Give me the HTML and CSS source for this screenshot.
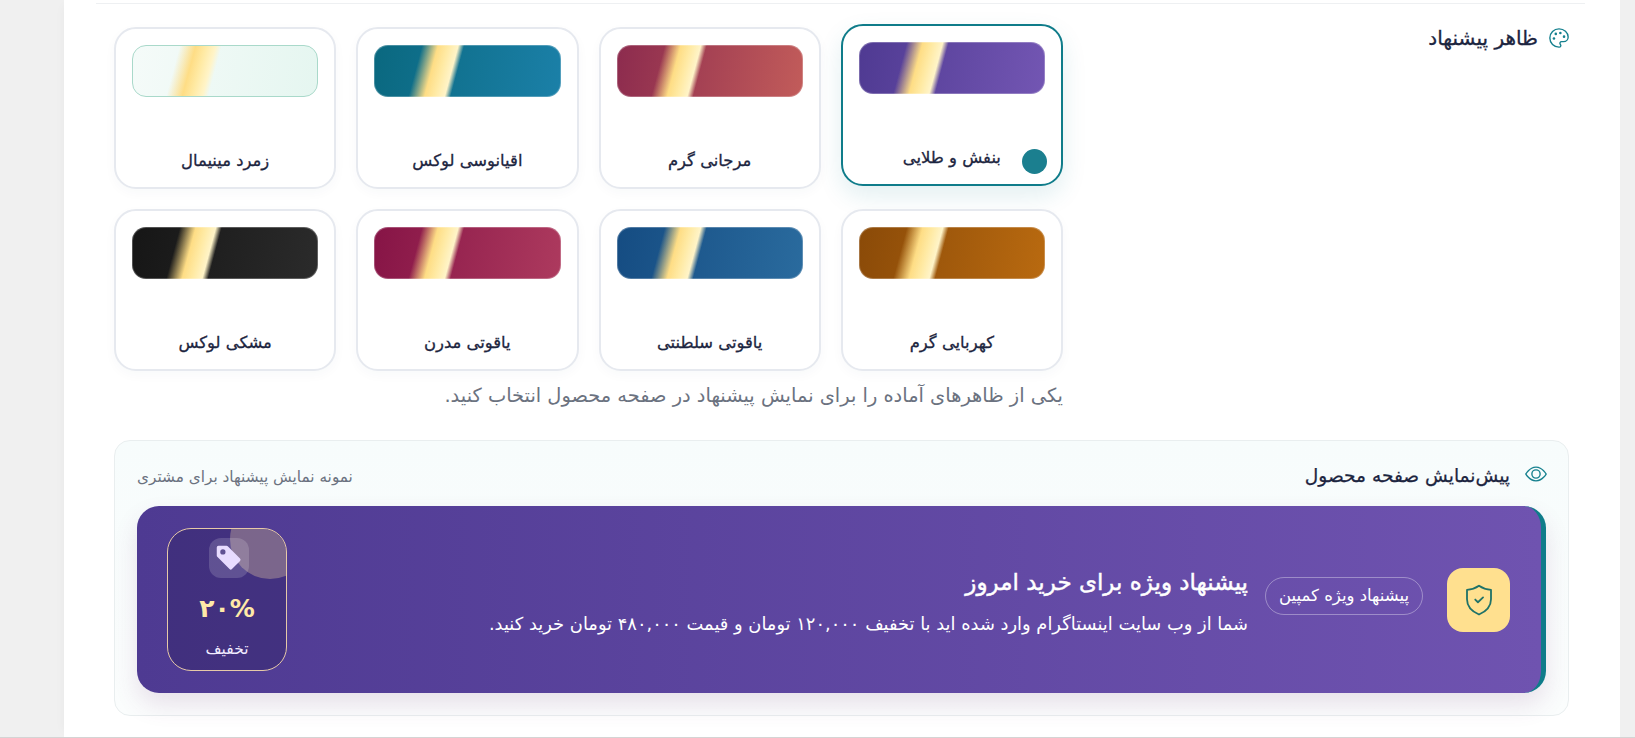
FILE: index.html
```html
<!DOCTYPE html>
<html lang="fa" dir="rtl">
<head>
<meta charset="utf-8">
<title>ظاهر پیشنهاد</title>
<link rel="stylesheet" href="styles.css">
</head>
<body>
<main class="panel">
  <hr class="rule">
  <div class="inner">
    <section class="row">
      <div class="legend">
        <svg class="ico-palette" viewBox="0 0 24 24" fill="none" stroke="currentColor" stroke-width="1.5" stroke-linecap="round" stroke-linejoin="round"><path d="M12 22a1 1 0 0 1 0-20 10 9 0 0 1 10 9 5 5 0 0 1-5 5h-2.25a1.75 1.75 0 0 0-1.4 2.8l.3.4a1.75 1.75 0 0 1-1.4 2.8z"/><circle cx="13.5" cy="6.5" r="1.4" fill="currentColor" stroke="none"/><circle cx="17.5" cy="10.5" r="1.4" fill="currentColor" stroke="none"/><circle cx="6.5" cy="12.5" r="1.4" fill="currentColor" stroke="none"/><circle cx="8.5" cy="7.5" r="1.4" fill="currentColor" stroke="none"/></svg>
        <span>ظاهر پیشنهاد</span>
      </div>
      <div class="options">
        <div class="grid">
          <div class="card selected"><div class="swatch violet"></div><div class="name">بنفش و طلایی</div><span class="dot"></span></div>
          <div class="card"><div class="swatch coral"></div><div class="name">مرجانی گرم</div></div>
          <div class="card"><div class="swatch ocean"></div><div class="name">اقیانوسی لوکس</div></div>
          <div class="card"><div class="swatch emerald"></div><div class="name">زمرد مینیمال</div></div>
          <div class="card"><div class="swatch amber"></div><div class="name">کهربایی گرم</div></div>
          <div class="card"><div class="swatch sapphire"></div><div class="name">یاقوتی سلطنتی</div></div>
          <div class="card"><div class="swatch ruby"></div><div class="name">یاقوتی مدرن</div></div>
          <div class="card"><div class="swatch black"></div><div class="name">مشکی لوکس</div></div>
        </div>
        <p class="help">یکی از ظاهرهای آماده را برای نمایش پیشنهاد در صفحه محصول انتخاب کنید.</p>
      </div>
    </section>

    <section class="preview">
      <div class="preview-head">
        <div class="preview-title">
          <svg class="ico-eye" viewBox="0 0 16 16" fill="currentColor"><path d="M16 8s-3-5.500-8-5.500S0 8 0 8s3 5.500 8 5.500S16 8 16 8zM1.173 8a13.133 13.133 0 0 1 1.660-2.043C4.120 4.668 5.880 3.500 8 3.500c2.120 0 3.879 1.168 5.168 2.457A13.133 13.133 0 0 1 14.828 8c-.058.087-.122.183-.195.288-.335.480-.830 1.120-1.465 1.755C11.879 11.332 10.119 12.500 8 12.500c-2.120 0-3.879-1.168-5.168-2.457A13.134 13.134 0 0 1 1.172 8z"/><path d="M8 5.500a2.500 2.500 0 1 0 0 5 2.500 2.500 0 0 0 0-5zM4.500 8a3.500 3.500 0 1 1 7 0 3.500 3.500 0 0 1-7 0z"/></svg>
          <span>پیش‌نمایش صفحه محصول</span>
        </div>
        <span class="preview-note">نمونه نمایش پیشنهاد برای مشتری</span>
      </div>
      <div class="banner">
        <div class="shield-box">
          <svg class="ico-shield" viewBox="0 0 24 24" fill="none" stroke="currentColor" stroke-width="1.2" stroke-linecap="round" stroke-linejoin="round"><path d="M12 2.500c2.500 1.700 5 2.500 8 2.800v6.200c0 4.500-3 8-8 10.200-5-2.200-8-5.700-8-10.200V5.300c3-.3 5.500-1.100 8-2.800z"/><path d="M9.500 11.700l1.800 1.800 3.400-3.200"/></svg>
        </div>
        <span class="pill">پیشنهاد ویژه کمپین</span>
        <div class="copy">
          <h2 class="title">پیشنهاد ویژه برای خرید امروز</h2>
          <p class="desc">شما از وب سایت اینستاگرام وارد شده اید با تخفیف ۱۲۰,۰۰۰ تومان و قیمت ۴۸۰,۰۰۰ تومان خرید کنید.</p>
        </div>
        <div class="discount">
          <span class="glow"></span>
          <div class="tag-box">
            <svg class="ico-tag" viewBox="0 0 16 16" fill="currentColor"><path d="M2 1a1 1 0 0 0-1 1v4.586a1 1 0 0 0 .293.707l7 7a1 1 0 0 0 1.414 0l4.586-4.586a1 1 0 0 0 0-1.414l-7-7A1 1 0 0 0 6.586 1H2zm4 3.500a1.500 1.500 0 1 1-3 0 1.500 1.500 0 0 1 3 0z"/></svg>
          </div>
          <div class="percent">۲۰%</div>
          <div class="off">تخفیف</div>
        </div>
      </div>
    </section>
  </div>
</main>
</body>
</html>
```

FILE: styles.css
```css
* { box-sizing: border-box; }
html, body { margin: 0; height: 738px; overflow: hidden; }
body {
  background: #f0f0f0;
  font-family: "DejaVu Sans", "Noto Sans", sans-serif;
  color: #1c2540;
  border-bottom: 1px solid #d4d4d4;
}
.panel {
  margin-right: 15px;
  margin-left: 64px;
  height: 737px;
  background: #fff;
  padding: 3px 35px 0 32px;
  box-shadow: -6px 0 10px -6px rgba(0,0,0,.04);
}
.rule { margin: 0; border: 0; border-top: 1px solid #eef0f2; }
.inner { padding: 23px 16px 0 18px; }
.row { display: flex; justify-content: space-between; align-items: flex-start; }
.legend { display: flex; align-items: center; gap: 10px; margin: -1px -1px 0 0; font-size: 20px; -webkit-text-stroke: .3px currentColor; }
.ico-palette { width: 22px; height: 22px; color: #15808e; }
.options { width: 949px; }
.grid { display: grid; grid-template-columns: repeat(4, 1fr); gap: 20px; }
.card {
  position: relative;
  height: 162px;
  padding: 16px;
  background: #fff;
  border: 2px solid #e6e9ef;
  border-radius: 22px;
  box-shadow: 0 4px 12px rgba(30,50,80,.03);
  text-align: center;
}
.card.selected {
  transform: translateY(-3px);
  border-color: #0f7c8a;
  box-shadow: 0 10px 24px rgba(15,124,138,.12);
}
.swatch {
  --a: #000; --b: #000;
  height: 52px;
  border-radius: 14px;
  border: 1px solid rgba(255,255,255,.25);
  background-origin: border-box;
  background-image:
    linear-gradient(105deg, transparent 24%, #fedd85 32%, #ffeaa4 37%, #fff4c8 42%, transparent 45%),
    linear-gradient(100deg, var(--a), var(--b));
}
.violet { --a: #4f3a92; --b: #7356b3; }
.coral { --a: #8c2b4e; --b: #c25c5a; }
.ocean { --a: #0a687f; --b: #1b80a8; }
.emerald { --a: #f5fbf9; --b: #e5f6f0; border-color: #a9d9ca; }
.amber { --a: #8a4a08; --b: #b96a10; }
.sapphire { --a: #154c82; --b: #2a6b9e; }
.ruby { --a: #861446; --b: #ad3a5e; }
.black { --a: #161616; --b: #2b2b2b; }
.name { margin-top: 52px; font-size: 16.4px; line-height: 24px; -webkit-text-stroke: .3px currentColor; }
.dot {
  position: absolute;
  right: 14px;
  bottom: 10px;
  width: 25px;
  height: 25px;
  border-radius: 50%;
  background: #1b7f8f;
}
.help { margin: 11px 0 0; font-size: 19.4px; line-height: 28px; color: #6b7280; }
.preview {
  margin-top: 30px;
  height: 276px;
  padding: 22px;
  border: 1px solid #e9eeef;
  border-radius: 16px;
  background: linear-gradient(180deg, #f7fcfc, #fbfdfd);
}
.preview-head { display: flex; justify-content: space-between; align-items: center; height: 24px; margin-bottom: 19px; }
.preview-title { display: flex; align-items: center; gap: 15px; font-size: 18.6px; -webkit-text-stroke: .25px currentColor; }
.ico-eye { width: 22px; height: 22px; color: #15808e; margin: -2px -1px 0 0; }
.preview-note { margin-top: 4px; font-size: 15.3px; color: #6b7280; }
.banner {
  display: flex;
  align-items: center;
  height: 187px;
  padding: 0 31px 0 30px;
  border-right: 5px solid #0f7c8a;
  border-radius: 22px;
  background: linear-gradient(90deg, #4e3a92, #6f53b0);
  box-shadow: 0 12px 24px rgba(120,60,120,.14);
  color: #fff;
}
.shield-box {
  display: flex; align-items: center; justify-content: center;
  width: 63px; height: 64px;
  border-radius: 16px;
  background: #ffe08f;
}
.ico-shield { width: 36px; height: 36px; color: #1f7268; }
.pill {
  display: flex; align-items: center; justify-content: center;
  width: 158px; height: 38px;
  margin: -8px 24px 0 17px;
  border: 1px solid rgba(255,255,255,.35);
  border-radius: 19px;
  font-size: 16.5px;
}
.copy { flex: 1; margin-top: 4px; }
.title { margin: 0 0 14px; font-size: 23px; line-height: 30px; font-weight: 400; -webkit-text-stroke: .45px currentColor; }
.desc { margin: 0; font-size: 17.85px; line-height: 26px; }
.discount {
  position: relative;
  overflow: hidden;
  display: flex; flex-direction: column; align-items: center;
  width: 120px; height: 143px;
  padding-top: 9px;
  border: 1px solid #e6c9a8;
  border-radius: 24px;
  background: rgba(40,30,90,.35);
}
.glow {
  position: absolute;
  top: -30px;
  right: -24px;
  width: 80px; height: 80px;
  border-radius: 50%;
  background: rgba(255,224,170,.3);
}
.tag-box {
  position: relative;
  display: flex; align-items: center; justify-content: center;
  width: 40px; height: 40px;
  margin-left: 4px;
  border-radius: 12px;
  background: rgba(255,255,255,.16);
}
.ico-tag { width: 28px; height: 28px; color: #e8dcff; }
.percent { position: relative; margin-top: 10px; font-size: 25px; line-height: 42px; font-weight: 700; letter-spacing: -3.5px; color: #ffe9a8; }
.off { position: relative; margin-top: 8px; font-size: 15.5px; line-height: 22px; color: #f2ecff; }
```
